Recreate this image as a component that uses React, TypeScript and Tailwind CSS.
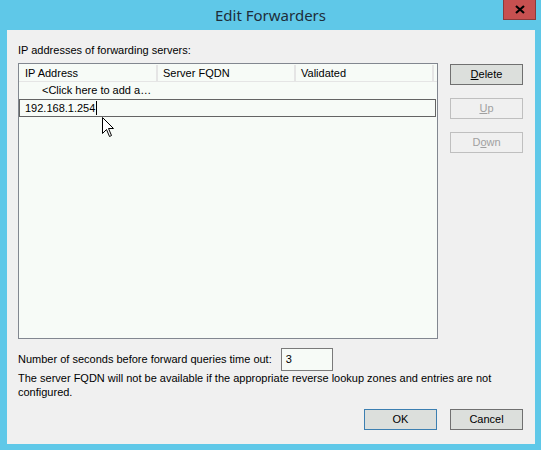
import React from "react";

const font = { fontFamily: "'Liberation Sans', Arial, sans-serif" };

const Btn = ({ children, variant }: { children: React.ReactNode; variant: "default" | "disabled" | "primary" }) => {
  const cls =
    variant === "disabled"
      ? "border-[#bfbfbf] bg-[#f0f0f0] text-[#a0a0a0]"
      : variant === "primary"
      ? "border-[#3c7fb1] bg-[#dcdfdc] text-black"
      : "border-[#707070] bg-[#dcdfdc] text-black";
  return (
    <div className={`flex h-[21px] items-center justify-center border ${cls}`}>{children}</div>
  );
};

const Cursor = () => (
  <svg width="13" height="21" viewBox="0 0 13 21" className="absolute left-[102px] top-[117px]">
    <path d="M0.5 0.5 L0.5 16.5 L4.5 12.5 L7.5 19.5 L9.5 18.5 L6.5 11.5 L11.5 11.5 Z" fill="#fff" stroke="#000" strokeWidth="1" />
  </svg>
);

export default function App() {
  return (
    <div className="relative flex h-[450px] w-[541px] flex-col bg-[#5fc8e8] text-[11px] text-black" style={font}>
      <div className="relative flex h-[30px] items-center justify-center">
        <span className="text-[15px] text-[#1e2d3a]" style={{ fontFamily: "'Noto Sans', 'Open Sans', sans-serif" }}>
          Edit Forwarders
        </span>
        <div className="absolute right-[5px] top-0 flex h-[20px] w-[33px] items-center justify-center border border-t-0 border-[#8b3a3a] bg-[#c75050]">
          <svg width="10" height="9" viewBox="0 0 10 9">
            <path d="M1 1 L9 8 M9 1 L1 8" stroke="#000" strokeWidth="2.2" />
          </svg>
        </div>
      </div>
      <div className="ml-[7px] flex h-[414px] w-[528px] flex-col bg-[#f0f0f0] px-[11px]">
        <div className="mt-[11px] h-[18px] leading-[18px]">IP addresses of forwarding servers:</div>
        <div className="mt-[4px] flex gap-[12px]">
          <div className="flex h-[276px] w-[420px] flex-col border border-[#828790] bg-[#f7fbf7]">
            <div className="flex h-[18px] items-center border-b border-[#e5e5e5] pt-[1px]">
              <div className="flex h-full w-[139px] items-center border-r-2 border-[#e5e5e5] pl-[6px]">IP Address</div>
              <div className="flex h-full w-[138px] items-center border-r-2 border-[#e5e5e5] pl-[5px]">Server FQDN</div>
              <div className="flex h-full w-[138px] items-center border-r-2 border-[#e5e5e5] pl-[5px]">Validated</div>
            </div>
            <div className="flex h-[17px] items-center pl-[23px]">&lt;Click here to add a…</div>
            <div className="flex h-[18px] w-[417px] items-center border border-[#646464] bg-[#f7fbf7] pl-[5px]">
              192.168.1.254<span className="ml-[1px] inline-block h-[14px] w-px bg-black" />
            </div>
          </div>
          <div className="flex w-[73px] flex-col gap-[13px] pt-[1px]">
            <Btn variant="default">
              <span><u>D</u>elete</span>
            </Btn>
            <Btn variant="disabled">
              <span><u>U</u>p</span>
            </Btn>
            <Btn variant="disabled">
              <span>D<u>o</u>wn</span>
            </Btn>
          </div>
        </div>
        <div className="mt-[9px] flex items-center">
          <span>Number of seconds before forward queries time out:</span>
          <div className="ml-[9px] flex h-[23px] w-[52px] items-center border border-[#7a7a7a] bg-[#f7fbf7] pl-[4px]">3</div>
        </div>
        <div className="mt-0 w-[480px] leading-[14px]">
          The server FQDN will not be available if the appropriate reverse lookup zones and entries are not configured.
        </div>
        <div className="mt-[10px] flex justify-end gap-[13px] pr-[1px]">
          <div className="w-[73px]">
            <Btn variant="primary">OK</Btn>
          </div>
          <div className="w-[73px]">
            <Btn variant="default">Cancel</Btn>
          </div>
        </div>
      </div>
      <Cursor />
    </div>
  );
}
